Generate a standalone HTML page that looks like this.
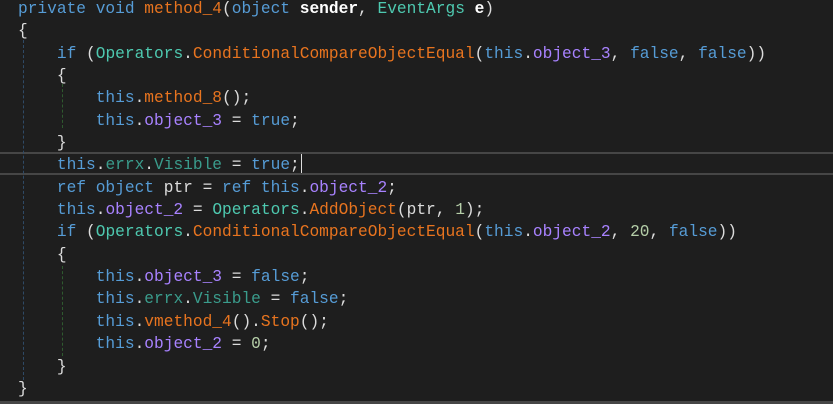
<!DOCTYPE html>
<html><head><meta charset="utf-8"><style>
html,body{margin:0;padding:0;background:#1e1e1e;width:833px;height:404px;overflow:hidden;position:relative}
.c{position:absolute;left:18px;top:-2px;font-family:"Liberation Mono",monospace;font-size:16.2px;color:#dcdcdc}
.l{height:22.35px;line-height:22.35px;white-space:pre}
.k{color:#569cd6}.m{color:#e8741f}.t{color:#4ec9b0}.f{color:#a882ff}.p{color:#3a9c8c}.b{color:#fff;font-weight:bold}.n{color:#b5cea8}
.cur{position:absolute;left:0;width:833px;top:152px;height:19px;border-top:2px solid #464646;border-bottom:2px solid #464646}
.g{position:absolute;width:0;border-left:1px dashed #2f4a66}
</style></head><body>
<div class="cur"></div>
<div class="g" style="left:23px;top:40px;height:340px"></div>
<div class="g" style="left:62px;top:84px;height:44px;border-color:#2f5a2f"></div>
<div class="g" style="left:62px;top:266px;height:90px;border-color:#2f5a2f"></div>
<div style="position:absolute;left:301px;top:154px;width:1px;height:19px;background:#ddd"></div>
<div style="position:absolute;left:0;top:401px;width:833px;height:3px;background:#464646"></div>
<div class="c">
<div class="l"><span class="k">private void</span> <span class="m">method_4</span>(<span class="k">object</span> <span class="b">sender</span>, <span class="t">EventArgs</span> <span class="b">e</span>)</div>
<div class="l">{</div>
<div class="l">    <span class="k">if</span> (<span class="t">Operators</span>.<span class="m">ConditionalCompareObjectEqual</span>(<span class="k">this</span>.<span class="f">object_3</span>, <span class="k">false</span>, <span class="k">false</span>))</div>
<div class="l">    {</div>
<div class="l">        <span class="k">this</span>.<span class="m">method_8</span>();</div>
<div class="l">        <span class="k">this</span>.<span class="f">object_3</span> = <span class="k">true</span>;</div>
<div class="l">    }</div>
<div class="l">    <span class="k">this</span>.<span class="p">errx</span>.<span class="p">Visible</span> = <span class="k">true</span>;</div>
<div class="l">    <span class="k">ref object</span> ptr = <span class="k">ref this</span>.<span class="f">object_2</span>;</div>
<div class="l">    <span class="k">this</span>.<span class="f">object_2</span> = <span class="t">Operators</span>.<span class="m">AddObject</span>(ptr, <span class="n">1</span>);</div>
<div class="l">    <span class="k">if</span> (<span class="t">Operators</span>.<span class="m">ConditionalCompareObjectEqual</span>(<span class="k">this</span>.<span class="f">object_2</span>, <span class="n">20</span>, <span class="k">false</span>))</div>
<div class="l">    {</div>
<div class="l">        <span class="k">this</span>.<span class="f">object_3</span> = <span class="k">false</span>;</div>
<div class="l">        <span class="k">this</span>.<span class="p">errx</span>.<span class="p">Visible</span> = <span class="k">false</span>;</div>
<div class="l">        <span class="k">this</span>.<span class="m">vmethod_4</span>().<span class="m">Stop</span>();</div>
<div class="l">        <span class="k">this</span>.<span class="f">object_2</span> = <span class="n">0</span>;</div>
<div class="l">    }</div>
<div class="l">}</div>
</div>
</body></html>
